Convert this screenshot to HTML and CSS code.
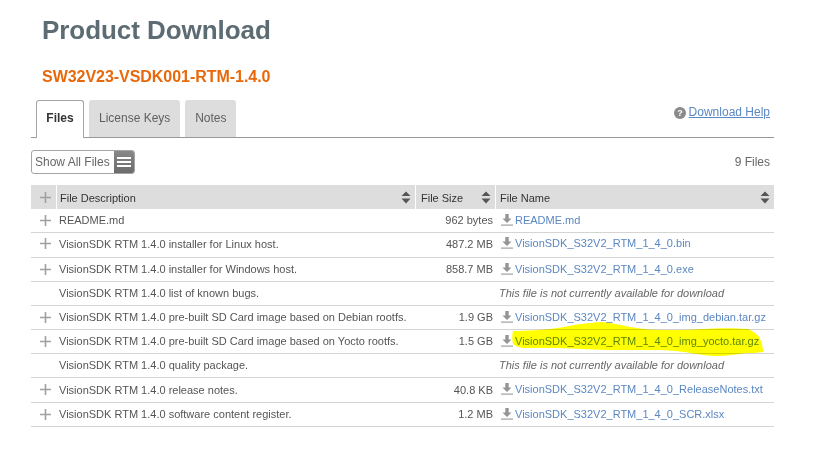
FILE: index.html
```html
<!DOCTYPE html>
<html lang="en">
<head>
<meta charset="utf-8">
<title>Product Download</title>
<link rel="stylesheet" href="styles.css">
</head>
<body>
<svg class="defs" width="0" height="0" aria-hidden="true">
  <symbol id="dl" viewBox="0 0 12 13"><path d="M4.300 1h3.400v4.500h2.800L6 10 1.500 5.500h2.800z" fill="#959595"/><rect x="0" y="11.500" width="12" height="1.200" fill="#a0a0a0"/></symbol>
  <symbol id="plus" viewBox="0 0 11 11"><path d="M4.700 0h1.600v4.700H11v1.600H6.300V11H4.700V6.300H0V4.700h4.700z" fill="#a0a0a0"/></symbol>
  <symbol id="sort" viewBox="0 0 10 13"><path d="M5 0.500L9.500 5H0.500zM0.500 7.500H9.500L5 12.500z" fill="#555"/></symbol>
</svg>
<main class="page">
  <h1 class="title">Product Download</h1>
  <h2 class="subtitle">SW32V23-VSDK001-RTM-1.4.0</h2>
  <div class="tabbar">
    <span class="tab tab-active">Files</span>
    <span class="tab">License Keys</span>
    <span class="tab tab-notes">Notes</span>
    <span class="help">
      <svg class="help-icon" viewBox="0 0 12 12"><circle cx="6" cy="6" r="6" fill="#8a8a8a"/><text x="6" y="9.300" text-anchor="middle" class="help-q">?</text></svg>
      <a href="#" class="help-link">Download Help</a>
    </span>
  </div>
  <div class="toolbar">
    <div class="filter">
      <span class="filter-label">Show All Files</span>
      <span class="filter-btn"><i></i><i></i><i></i></span>
    </div>
    <span class="count">9 Files</span>
  </div>
  <table class="files">
    <colgroup><col class="c-plus"><col class="c-desc"><col class="c-size"><col class="c-name"></colgroup>
    <thead>
      <tr>
        <th class="th-plus"><svg class="plus"><use href="#plus"/></svg></th>
        <th><span class="th-in">File Description<svg class="sort"><use href="#sort"/></svg></span></th>
        <th class="th-size"><span class="th-in">File Size<svg class="sort"><use href="#sort"/></svg></span></th>
        <th class="th-name"><span class="th-in">File Name<svg class="sort"><use href="#sort"/></svg></span></th>
      </tr>
    </thead>
    <tbody>
      <tr><td class="td-plus"><svg class="plus"><use href="#plus"/></svg></td><td>README.md</td><td class="size">962 bytes</td><td class="name"><svg class="dl"><use href="#dl"/></svg><a href="#">README.md</a></td></tr>
      <tr class="tall lift"><td class="td-plus"><svg class="plus"><use href="#plus"/></svg></td><td>VisionSDK RTM 1.4.0 installer for Linux host.</td><td class="size">487.2 MB</td><td class="name"><svg class="dl"><use href="#dl"/></svg><a href="#">VisionSDK_S32V2_RTM_1_4_0.bin</a></td></tr>
      <tr><td class="td-plus"><svg class="plus"><use href="#plus"/></svg></td><td>VisionSDK RTM 1.4.0 installer for Windows host.</td><td class="size">858.7 MB</td><td class="name"><svg class="dl"><use href="#dl"/></svg><a href="#">VisionSDK_S32V2_RTM_1_4_0.exe</a></td></tr>
      <tr><td></td><td>VisionSDK RTM 1.4.0 list of known bugs.</td><td></td><td class="name na">This file is not currently available for download</td></tr>
      <tr><td class="td-plus"><svg class="plus"><use href="#plus"/></svg></td><td>VisionSDK RTM 1.4.0 pre-built SD Card image based on Debian rootfs.</td><td class="size">1.9 GB</td><td class="name"><svg class="dl"><use href="#dl"/></svg><a href="#">VisionSDK_S32V2_RTM_1_4_0_img_debian.tar.gz</a></td></tr>
      <tr><td class="td-plus"><svg class="plus"><use href="#plus"/></svg></td><td>VisionSDK RTM 1.4.0 pre-built SD Card image based on Yocto rootfs.</td><td class="size">1.5 GB</td><td class="name hl-cell"><svg class="dl"><use href="#dl"/></svg><a href="#">VisionSDK_S32V2_RTM_1_4_0_img_yocto.tar.gz</a><svg class="marker" viewBox="0 0 252 35" preserveAspectRatio="none"><path d="M1 9C15 9 32 8 45 6C55 5 60 3 68 2C78 1 85 0 91 0C100 1 110 3 118 5C130 7 140 8 151 8C165 8 178 8 191 7C205 6 222 6 236 7C240 9 244 11 247 15C250 20 251 26 251 30C245 31 240 31 235 31C225 32 215 34 205 34C195 34 187 32 178 31C168 29 155 28 145 28C128 28 112 28 95 28C78 27 62 27 45 26C33 26 22 26 11 26C6 25 3 24 1 22C0 17 0 13 1 9z" fill="#ffff00"/></svg></td></tr>
      <tr><td></td><td>VisionSDK RTM 1.4.0 quality package.</td><td></td><td class="name na">This file is not currently available for download</td></tr>
      <tr class="tall"><td class="td-plus"><svg class="plus"><use href="#plus"/></svg></td><td>VisionSDK RTM 1.4.0 release notes.</td><td class="size">40.8 KB</td><td class="name"><svg class="dl"><use href="#dl"/></svg><a href="#">VisionSDK_S32V2_RTM_1_4_0_ReleaseNotes.txt</a></td></tr>
      <tr><td class="td-plus"><svg class="plus"><use href="#plus"/></svg></td><td>VisionSDK RTM 1.4.0 software content register.</td><td class="size">1.2 MB</td><td class="name"><svg class="dl"><use href="#dl"/></svg><a href="#">VisionSDK_S32V2_RTM_1_4_0_SCR.xlsx</a></td></tr>
    </tbody>
  </table>
</main>
</body>
</html>
```
FILE: styles.css
```css
* { box-sizing: border-box; }
html, body { margin: 0; background: #fff; }
body { font-family: "Liberation Sans", Arial, sans-serif; color: #555; overflow: hidden; }
.defs { position: absolute; }
.page { width: 826px; height: 460px; padding: 14px 52px 0 31px; }
.title { margin: 0 0 0 11px; font-size: 26px; line-height: 32px; font-weight: 700; letter-spacing: -0.06px; color: #5d6b73; }
.subtitle { margin: 20px 0 0 11px; font-size: 16px; line-height: 22px; font-weight: 700; letter-spacing: -0.04px; color: #e8690b; }
.tabbar { display: flex; align-items: flex-end; gap: 5px; height: 38px; margin-top: 12px; padding-left: 5px; border-bottom: 1px solid #999; }
.tab { height: 37px; padding: 0 10px 2px; display: flex; align-items: center; font-size: 12px; background: #ddd; color: #606060; border-radius: 3px 3px 0 0; }
.tab-notes { width: 51px; padding: 0 0 2px; justify-content: center; }
.tab-active { height: 38px; margin-bottom: -1px; width: 48px; padding: 0 0 3px; justify-content: center; background: #fff; border: 1px solid #a5a5a5; border-bottom: 0; font-weight: 700; color: #333; }
.help { margin-left: auto; align-self: flex-start; display: flex; align-items: center; gap: 3px; padding: 5px 4px 0 0; font-size: 12px; }
.help-icon { width: 12px; height: 12px; margin-top: 2px; }
.help-q { font: 700 9px "Liberation Sans", Arial, sans-serif; fill: #fff; }
.help-link { color: #5b87c2; }
.toolbar { display: flex; align-items: center; justify-content: space-between; height: 24px; margin-top: 12px; }
.filter { display: flex; width: 104px; height: 24px; border: 1px solid #a5a5a5; border-radius: 3px; overflow: hidden; }
.filter-label { flex: 1; padding-left: 3px; font-size: 12px; line-height: 22px; color: #666; white-space: nowrap; }
.filter-btn { width: 20px; display: flex; flex-direction: column; justify-content: center; gap: 2px; padding: 0 3px; background: linear-gradient(#888, #6c6c6c); }
.filter-btn i { display: block; height: 2px; background: #fff; }
.count { padding-right: 4px; font-size: 12px; color: #666; }
.files { width: 743px; margin-top: 11px; border-collapse: separate; border-spacing: 0; table-layout: fixed; font-size: 11px; }
.c-plus { width: 26px; }
.c-desc { width: 359px; }
.c-size { width: 80px; }
.c-name { width: 278px; }
th { height: 24px; padding: 0 0 0 3px; background: #ddd; border-right: 1px solid #fff; font-weight: 400; text-align: left; color: #333; }
th:last-child { border-right: 0; }
.th-plus { padding: 0 0 0 3px; text-align: center; }
.th-size { padding-left: 5px; }
.th-name { padding-left: 4px; }
.th-in { display: flex; align-items: center; justify-content: space-between; padding-right: 4px; padding-top: 2px; }
td { height: 24px; padding: 0 0 1px 2px; border-bottom: 1px solid #d4d4d4; color: #555; white-space: nowrap; }
.tall td { height: 25px; }
.td-plus { padding: 0 0 2px 3px; text-align: center; }
.plus { width: 11px; height: 11px; vertical-align: middle; }
.sort { width: 10px; height: 13px; margin-top: -2px; flex: none; }
.size { padding: 0 3px 1px 0; text-align: right; }
.name { padding: 0 0 3px 5px; font-size: 11px; }
.name a { color: #5b87c2; text-decoration: none; margin-left: 2px; }
.dl { width: 12px; height: 13px; vertical-align: -2px; }
.na { font-style: italic; padding: 0 0 1px 3px; color: #666; }
.lift td { padding-bottom: 3px; }
.lift .name { padding-bottom: 5px; }
.lift .td-plus { padding-bottom: 4px; }
.hl-cell { position: relative; }
.marker { position: absolute; left: 16px; top: -8px; width: 252px; height: 35px; mix-blend-mode: multiply; }
```
